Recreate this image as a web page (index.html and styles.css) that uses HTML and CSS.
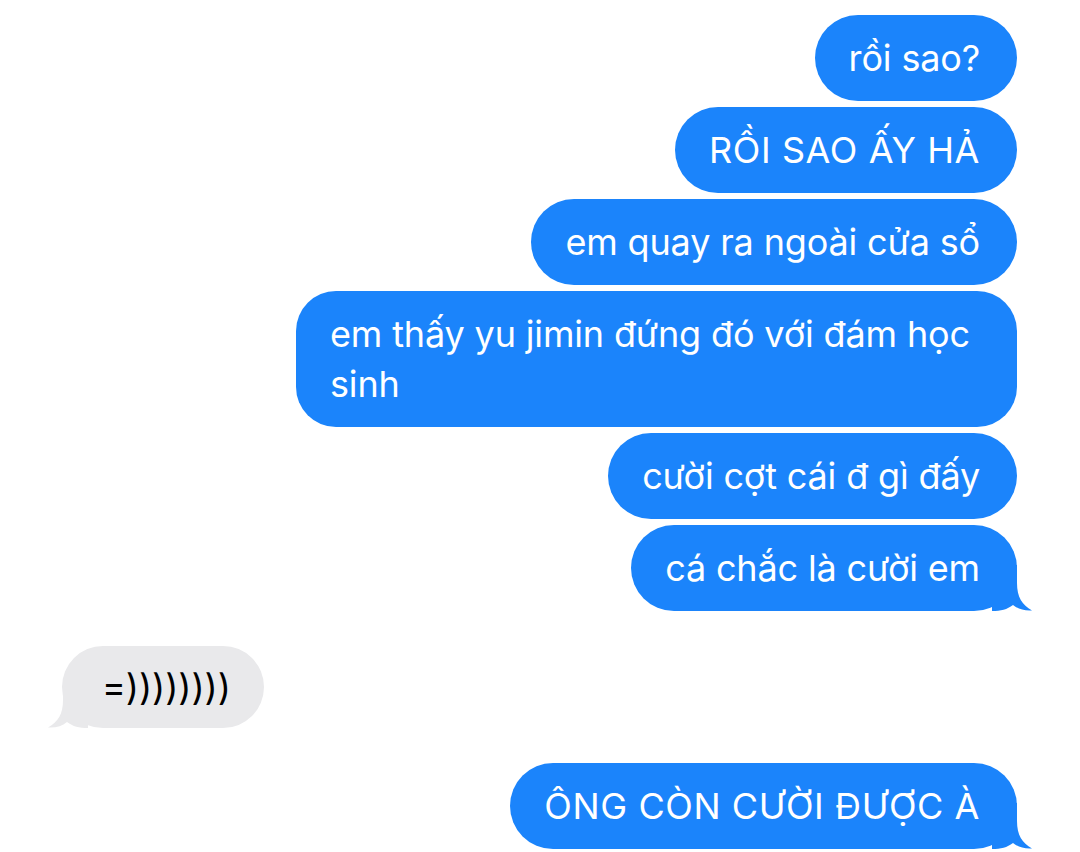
FILE: index.html
```html
<!DOCTYPE html>
<html lang="vi">
<head>
<meta charset="utf-8">
<title>Messages</title>
<link rel="stylesheet" href="styles.css">
</head>
<body>
<main class="chat">
  <div class="group sent">
    <div class="bubble">rồi sao?</div>
    <div class="bubble caps">RỒI SAO ẤY HẢ</div>
    <div class="bubble">em quay ra ngoài cửa sổ</div>
    <div class="bubble wide">em thấy yu jimin đứng đó với đám học sinh</div>
    <div class="bubble">cười cợt cái đ gì đấy</div>
    <div class="bubble tail">cá chắc là cười em<svg class="tail-svg" width="40" height="46" viewBox="0 0 40 46"><path d="M0,0 H25 V18 C25,32 30,40 40,45.5 C32,46 26,44 21,40 C15,44.5 9,46 0,46 Z"/></svg></div>
  </div>
  <div class="group received">
    <div class="bubble tail">=))))))))<svg class="tail-svg" width="40" height="46" viewBox="0 0 40 46"><path d="M0,0 H25 V18 C25,32 30,40 40,45.5 C32,46 26,44 21,40 C15,44.5 9,46 0,46 Z"/></svg></div>
  </div>
  <div class="group sent">
    <div class="bubble tail caps">ÔNG CÒN CƯỜI ĐƯỢC À<svg class="tail-svg" width="40" height="46" viewBox="0 0 40 46"><path d="M0,0 H25 V18 C25,32 30,40 40,45.5 C32,46 26,44 21,40 C15,44.5 9,46 0,46 Z"/></svg></div>
  </div>
</main>
</body>
</html>
```

FILE: styles.css
```css
html, body {
  margin: 0;
  padding: 0;
  background: #ffffff;
}

.chat {
  width: 1080px;
  height: 852px;
  box-sizing: border-box;
  padding: 15px 63px 0 62px;
  display: flex;
  flex-direction: column;
  gap: 35px;
  overflow: hidden;
  font-family: "Inter", "Noto Sans", sans-serif;
  font-size: 36px;
  line-height: 50px;
  letter-spacing: -0.15px;
}

.group {
  display: flex;
  flex-direction: column;
  gap: 6px;
}

.group.sent {
  align-items: flex-end;
}

.group.received {
  align-items: flex-start;
}

.bubble {
  position: relative;
  box-sizing: border-box;
  max-width: 721px;
  padding: 18px 37px 18px 34px;
  border-radius: 43px;
  background: #1b84fb;
  color: #ffffff;
}

.bubble.caps {
  letter-spacing: 0.6px;
}

.bubble.wide {
  border-radius: 40px;
}

.received .bubble {
  background: #e9e9eb;
  color: #000000;
  padding: 16px 33px 16px 40px;
  border-radius: 41px;
  letter-spacing: 0;
}

.tail-svg {
  position: absolute;
  right: -15px;
  bottom: 0;
  fill: #1b84fb;
}

.received .tail-svg {
  right: auto;
  left: -14px;
  transform: scaleX(-1);
  fill: #e9e9eb;
}
```
